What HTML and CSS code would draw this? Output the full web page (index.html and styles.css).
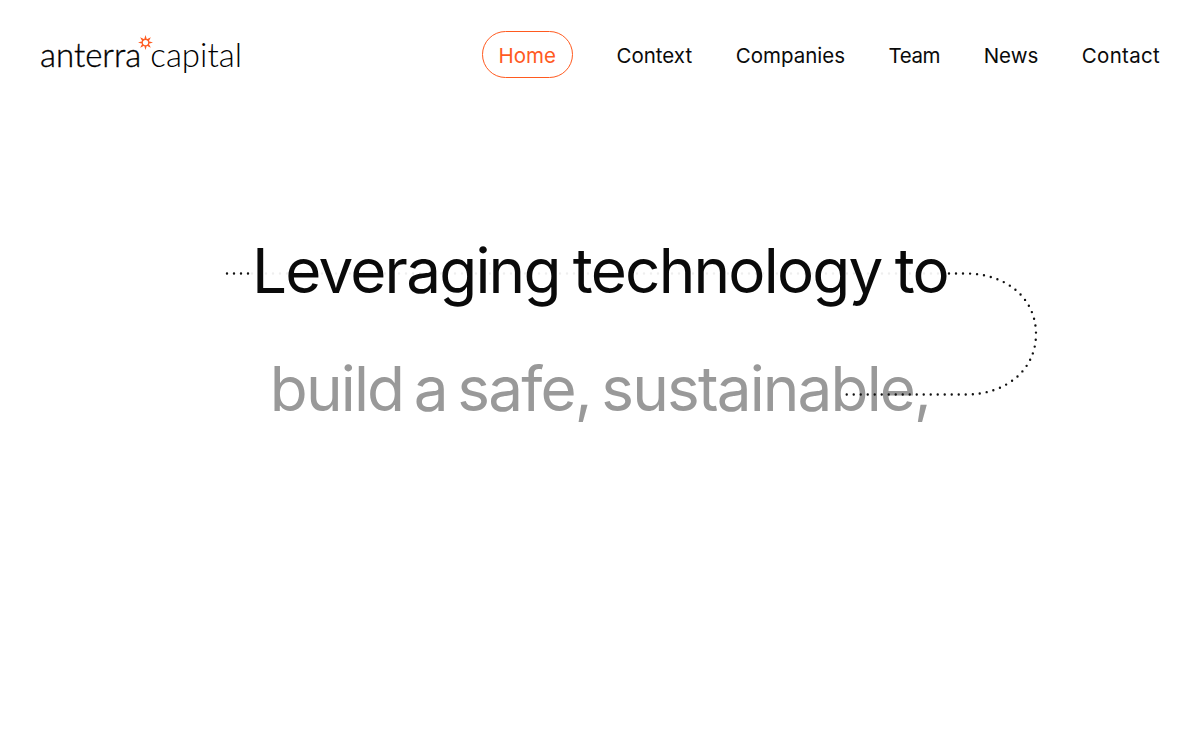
FILE: index.html
```html
<!DOCTYPE html>
<html lang="en">
<head>
    <meta charset="UTF-8">
    <meta name="viewport" content="width=device-width, initial-scale=1.0">
    <title>Anterra Capital</title>
    <link rel="stylesheet" href="styles.css">
</head>
<body>
    <header class="header">
        <a class="logo" href="#">
            <span class="logo-first">anterra</span>
            <svg class="logo-star" viewBox="0 0 16 16" aria-hidden="true">
                <path fill="#ff5a1f" d="M8 0L9.400 4.500L13.700 2.300L11.500 6.600L16 8L11.500 9.400L13.700 13.700L9.400 11.500L8 16L6.600 11.500L2.300 13.700L4.500 9.400L0 8L4.500 6.600L2.300 2.300L6.600 4.500Z"/>
                <circle cx="8" cy="8" r="2.800" fill="#fff"/>
            </svg>
            <span class="logo-second">capital</span>
        </a>
        <nav class="nav">
            <a class="nav-link active" href="#">Home</a>
            <a class="nav-link" href="#">Context</a>
            <a class="nav-link" href="#">Companies</a>
            <a class="nav-link team" href="#">Team</a>
            <a class="nav-link" href="#">News</a>
            <a class="nav-link contact" href="#">Contact</a>
        </nav>
    </header>

    <main class="hero">
        <h1 class="line first">Leveraging technology to</h1>
        <h1 class="line muted">build a safe, sustainable,</h1>

        <!-- dotted line that runs behind the headline and loops back -->
        <svg class="dots" width="1200" height="741" viewBox="0 0 1200 741" aria-hidden="true">
            <path class="dots-faint" d="M252 273.500H947"/>
            <path class="dots-dark" d="M227 273.500H250"/>
            <path class="dots-dark" d="M949 273.500H966C1006 273.500 1036 298 1036 334C1036 370 1006 394.500 966 394.500H845"/>
        </svg>
    </main>
</body>
</html>
```

FILE: styles.css
```css
body {
    font-family: 'Inter', sans-serif;
    background-color: #fff;
    color: #0a0a0a;
    margin: 0;
    height: 741px;
    position: relative;
    overflow: hidden;
}

.header {
    display: flex;
    justify-content: space-between;
    align-items: center;
    padding: 31px 40px 0;
}

.logo {
    display: flex;
    align-items: baseline;
    position: relative;
    color: #000;
    text-decoration: none;
    font-family: 'Lato', sans-serif;
    font-size: 33px;
    font-weight: 300;
    line-height: 47px;
}

.logo-first {
    -webkit-text-stroke: 0.350px #000;
}

.logo-second {
    margin-left: 9px;
}

.logo-star {
    position: absolute;
    left: 98px;
    top: 4px;
    width: 15px;
    height: 15px;
}

.nav {
    display: flex;
    align-items: center;
    gap: 43.500px;
}

.nav-link {
    color: #0a0a0a;
    text-decoration: none;
    font-size: 20.500px;
    line-height: 24px;
    padding-top: 2px;
}

.nav-link.team {
    letter-spacing: -0.400px;
}

.nav-link.contact {
    letter-spacing: 0.300px;
}

.nav-link.active {
    color: #ff5a1f;
    border: 1px solid #ff5a1f;
    border-radius: 24px;
    padding: 12px 16px 9px;
}

.hero {
    display: flex;
    flex-direction: column;
    align-items: center;
    padding-top: 134px;
}

.line {
    margin: 0;
    font-size: 62px;
    font-weight: 400;
    line-height: 118px;
    white-space: nowrap;
}

/* first line sits above the faint dots */
.first {
    position: relative;
    z-index: 1;
    letter-spacing: -1.800px;
    word-spacing: -2.500px;
}

.muted {
    color: #999;
    letter-spacing: -1.850px;
    word-spacing: -5px;
}

.dots {
    position: absolute;
    left: 0;
    top: 0;
    pointer-events: none;
}

.dots path {
    fill: none;
    stroke-linecap: round;
    stroke-width: 2.400;
    stroke-dasharray: 0 7;
}

.dots-dark {
    stroke: #111;
}

.dots-faint {
    stroke: #eee;
}
```
